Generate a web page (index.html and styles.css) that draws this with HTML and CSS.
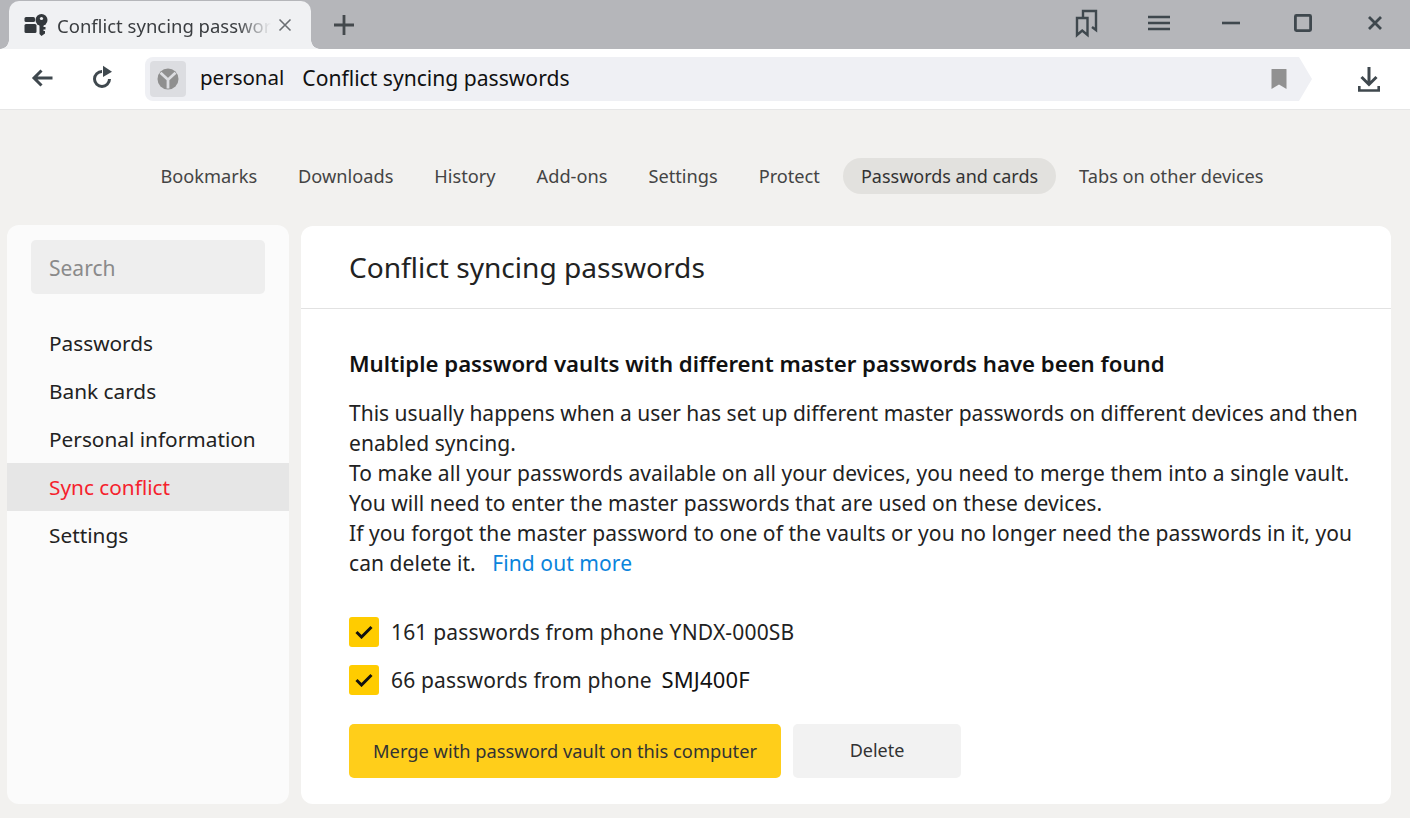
FILE: index.html
```html
<!DOCTYPE html>
<html lang="en">
<head>
    <meta charset="UTF-8">
    <title>Conflict syncing passwords</title>
    <link rel="stylesheet" href="styles.css">
</head>
<body>
    <div class="tabstrip">
        <div class="tab">
            <svg class="tab-icon" width="24" height="22" viewBox="0 0 24 22">
                <rect x="0.500" y="3" width="10.500" height="5" rx="1.500" fill="#33383c"/>
                <rect x="0.500" y="10" width="12" height="9" rx="1.500" fill="#33383c"/>
                <circle cx="17.500" cy="6" r="6" fill="#33383c"/>
                <circle cx="17.500" cy="4.500" r="1.600" fill="#f0f1f3"/>
                <path fill="#33383c" d="M15.500 10h4v3h2v2.500h-2V17h1.500v2.500l-3.500 2.500-2-2z"/>
            </svg>
            <span class="tab-title">Conflict syncing passwords</span>
            <svg class="tab-close" width="14" height="14" viewBox="0 0 14 14"><path d="M1.500 1.500l11 11M12.500 1.500l-11 11" stroke="#6a6e72" stroke-width="1.600" fill="none"/></svg>
        </div>
        <svg class="new-tab" width="22" height="22" viewBox="0 0 22 22"><path d="M11 1v20M1 11h20" stroke="#44494d" stroke-width="2.800" fill="none"/></svg>
        <div class="window-btns">
            <svg width="24" height="29" viewBox="0 0 24 29" fill="none" stroke="#3f484e" stroke-width="2.400"><path d="M2 9H12.500V26L7.200 21.500 2 26z"/><path d="M8 8V2H21V21L17 18"/></svg>
            <svg class="burger" width="22" height="16" viewBox="0 0 22 16"><path d="M0 2h22M0 8h22M0 14h22" stroke="#3f484e" stroke-width="2.600" fill="none"/></svg>
            <svg class="min" width="18" height="4" viewBox="0 0 18 4"><path d="M0 2h18" stroke="#3f484e" stroke-width="2.600"/></svg>
            <svg class="max" width="18" height="18" viewBox="0 0 18 18"><rect x="1.400" y="1.400" width="15.200" height="15.200" rx="1" fill="none" stroke="#3f484e" stroke-width="2.800"/></svg>
            <svg class="close" width="16" height="16" viewBox="0 0 16 16"><path d="M2 2l12 12M14 2L2 14" stroke="#3f484e" stroke-width="2.800" fill="none"/></svg>
        </div>
    </div>

    <div class="toolbar">
        <svg class="back" width="22" height="18" viewBox="0 0 22 18"><path d="M21.500 9H3M10.500 1.500L3 9l7.500 7.500" fill="none" stroke="#3f484e" stroke-width="3"/></svg>
        <svg class="reload" width="22" height="26" viewBox="0 0 22 26"><path d="M11 6.500A7.500 7.500 0 1 0 18.500 14" fill="none" stroke="#3f484e" stroke-width="3"/><path d="M12 .7L21 6.700 12 12z" fill="#3f484e"/></svg>
        <div class="addressbar">
            <div class="site-badge">
                <svg width="22" height="22" viewBox="0 0 22 22"><circle cx="11" cy="11" r="10.500" fill="#8f8f8f"/><path d="M3.500 4.700L11 11.700l7.500-7M11 11.700v8.800" fill="none" stroke="#dcdde1" stroke-width="2.800"/></svg>
            </div>
            <span class="addr-host">personal</span>
            <span class="addr-title">Conflict syncing passwords</span>
            <svg class="addr-mark" width="16" height="20" viewBox="0 0 16 20"><path d="M1 0h14c.500 0 .500.500.500.500V20L8 15.500.500 20V.500C.500.500.500 0 1 0z" fill="#919191"/></svg>
        </div>
        <svg class="download" width="22" height="25" viewBox="0 0 22 25"><path d="M11 0v17M3.500 10l7.500 7.500L18.500 10" fill="none" stroke="#3f484e" stroke-width="3"/><path d="M1.300 19v4.500h19.400V19" fill="none" stroke="#3f484e" stroke-width="2.600"/></svg>
    </div>

    <nav class="topnav">
        <a>Bookmarks</a>
        <a>Downloads</a>
        <a>History</a>
        <a>Add-ons</a>
        <a>Settings</a>
        <a>Protect</a>
        <a class="active">Passwords and cards</a>
        <a>Tabs on other devices</a>
    </nav>

    <div class="content">
        <aside class="sidebar">
            <div class="search">Search</div>
            <ul class="side-menu">
                <li>Passwords</li>
                <li>Bank cards</li>
                <li>Personal information</li>
                <li class="current">Sync conflict</li>
                <li>Settings</li>
            </ul>
        </aside>
        <main class="panel">
            <h1 class="panel-title">Conflict syncing passwords</h1>
            <div class="panel-body">
                <h2>Multiple password vaults with different master passwords have been found</h2>
                <p><span class="tight">This usually happens when a user has set up different master passwords on different devices and then</span> enabled syncing.<br>
                To make all your passwords available on all your devices, you need to merge them into a single vault.<br>
                You will need to enter the master passwords that are used on these devices.<br>
                If you forgot the master password to one of the vaults or you no longer need the passwords in it, you can delete it. <a class="more">Find out more</a></p>
                <div class="checks">
                    <label class="check">
                        <span class="box"><svg width="18" height="14" viewBox="0 0 18 14"><path d="M1.500 7l5 5L16.500 2" fill="none" stroke="#111" stroke-width="3"/></svg></span>
                        <span>161 passwords from phone YNDX-000SB</span>
                    </label>
                    <label class="check">
                        <span class="box"><svg width="18" height="14" viewBox="0 0 18 14"><path d="M1.500 7l5 5L16.500 2" fill="none" stroke="#111" stroke-width="3"/></svg></span>
                        <span>66 passwords from phone <span class="device">SMJ400F</span></span>
                    </label>
                </div>
                <div class="actions">
                    <button class="btn btn-yellow">Merge with password vault on this computer</button>
                    <button class="btn btn-grey">Delete</button>
                </div>
            </div>
        </main>
    </div>
</body>
</html>
```

FILE: styles.css
```css
* {
    box-sizing: border-box;
}
html, body {
    height: 100%;
}
body {
    margin: 0;
    background: #f2f1ef;
    font-family: "Noto Sans", "Open Sans", sans-serif;
    color: #222;
    overflow: hidden;
    display: flex;
    flex-direction: column;
}
.tabstrip {
    height: 49px;
    flex: none;
    background: #b5b6ba;
    display: flex;
    align-items: flex-end;
    padding-left: 9px;
}
.tab {
    width: 302px;
    height: 48px;
    background: #f0f1f3;
    border-radius: 10px 10px 0 0;
    display: flex;
    align-items: center;
    padding: 0 18px 0 15px;
    position: relative;
}
/* little flares where the tab meets the toolbar */
.tab::before,
.tab::after {
    content: "";
    position: absolute;
    bottom: 0;
    width: 9px;
    height: 9px;
}
.tab::before {
    left: -9px;
    background: radial-gradient(circle at 0 0, transparent 8.500px, #f0f1f3 9px);
}
.tab::after {
    right: -9px;
    background: radial-gradient(circle at 100% 0, transparent 8.500px, #f0f1f3 9px);
}
.tab-title {
    font-size: 18.500px;
    line-height: 26px;
    color: #3a3d40;
    margin: 2px 0 0 9px;
    width: 214px;
    overflow: hidden;
    white-space: nowrap;
    -webkit-mask-image: linear-gradient(to right, #000 84%, transparent 100%);
    mask-image: linear-gradient(to right, #000 84%, transparent 100%);
}
.tab-close {
    margin-left: 7px;
}
.new-tab {
    margin: 0 0 13px 22px;
}
.window-btns {
    margin-left: auto;
    height: 49px;
    display: flex;
    align-items: center;
    padding: 0 27px 3px 0;
}
.window-btns .burger {
    margin-left: 49px;
}
.window-btns .min {
    margin-left: 52px;
}
.window-btns .max {
    margin-left: 54px;
}
.window-btns .close {
    margin-left: 55px;
}
.toolbar {
    height: 61px;
    flex: none;
    background: #fff;
    border-bottom: 1px solid #e6e6e6;
    display: flex;
    align-items: center;
    padding-left: 31px;
}
.back {
    margin-bottom: 2px;
}
.reload {
    margin-left: 38px;
    margin-bottom: 2px;
}
.addressbar {
    width: 1167px;
    height: 44px;
    margin-left: 32px;
    background: #eff0f4;
    border-radius: 8px 0 0 8px;
    clip-path: polygon(0 0, 1154px 0, 100% 50%, 1154px 100%, 0 100%);
    display: flex;
    align-items: center;
    padding-left: 5px;
    font-size: 21px;
    color: #111;
}
.site-badge {
    width: 36px;
    height: 36px;
    background: #dcdde1;
    border-radius: 4px;
    display: flex;
    align-items: center;
    justify-content: center;
}
.addr-host {
    margin: 0 0 4px 14px;
    font-size: 20.500px;
}
.addr-title {
    margin: 0 0 4px 18px;
    font-size: 21.100px;
}
.addr-mark {
    margin-left: auto;
    margin-right: 25px;
}
.download {
    margin-left: 46px;
}
.topnav {
    flex: none;
    height: 115px;
    padding: 48px 0 0 14px;
    display: flex;
    justify-content: center;
    align-items: flex-start;
    gap: 5px;
    font-size: 18.200px;
    color: #444;
}
.topnav a {
    height: 36px;
    line-height: 36px;
    padding: 0 18px;
    border-radius: 18px;
    white-space: nowrap;
}
.topnav .active {
    background: #e2e1de;
    color: #333;
    font-size: 18px;
}
.content {
    flex: 1;
    display: flex;
    gap: 12px;
    padding: 0 19px 14px 7px;
}
.sidebar {
    width: 282px;
    background: #fbfbfb;
    border-radius: 12px;
    padding-top: 15px;
}
.search {
    width: 234px;
    height: 54px;
    margin-left: 24px;
    background: #eeeeee;
    border-radius: 5px;
    padding-left: 18px;
    line-height: 56px;
    font-size: 21px;
    color: #8a8a8a;
}
.side-menu {
    list-style: none;
    margin: 25px 0 0;
    padding: 0;
    font-size: 20.800px;
}
.side-menu li {
    height: 48px;
    line-height: 49px;
    padding-left: 42px;
    white-space: nowrap;
}
.side-menu .current {
    background: #e6e6e6;
    color: #f5222d;
}
.panel {
    flex: 1;
    margin-top: 1px;
    background: #fff;
    border-radius: 12px;
    min-width: 0;
}
.panel-title {
    height: 83px;
    line-height: 83px;
    margin: 0;
    padding-left: 48px;
    font-size: 28.100px;
    font-weight: 400;
    color: #222;
    border-bottom: 1px solid #e2e2e2;
}
.panel-body {
    padding: 37px 20px 0 48px;
}
.panel-body h2 {
    margin: 0;
    font-size: 22.200px;
    font-weight: 600;
    line-height: 36px;
    color: #111;
}
.panel-body p {
    margin: 16px 0 0;
    font-size: 21px;
    line-height: 30px;
    letter-spacing: .07px;
}
.tight {
    letter-spacing: 0;
}
.more {
    color: #0a84dc;
    margin-left: 11px;
}
.checks {
    margin-top: 39px;
    display: flex;
    flex-direction: column;
    gap: 18px;
}
.check {
    display: flex;
    align-items: center;
    gap: 12px;
    height: 30px;
    font-size: 21px;
    letter-spacing: .17px;
}
.device {
    font-size: 22px;
    line-height: 1;
    margin-left: 4px;
    color: #111;
}
.box {
    width: 30px;
    height: 30px;
    background: #ffcc00;
    border-radius: 3px;
    display: flex;
    align-items: center;
    justify-content: center;
}
.actions {
    margin-top: 29px;
    display: flex;
    gap: 12px;
}
.btn {
    height: 54px;
    border: 0;
    border-radius: 5px;
    padding-bottom: 3px;
    font: inherit;
    font-size: 18.300px;
    color: #333;
}
.btn-yellow {
    width: 432px;
    background: #ffce1a;
}
.btn-grey {
    width: 168px;
    background: #f2f2f2;
    font-size: 18px;
}
```
